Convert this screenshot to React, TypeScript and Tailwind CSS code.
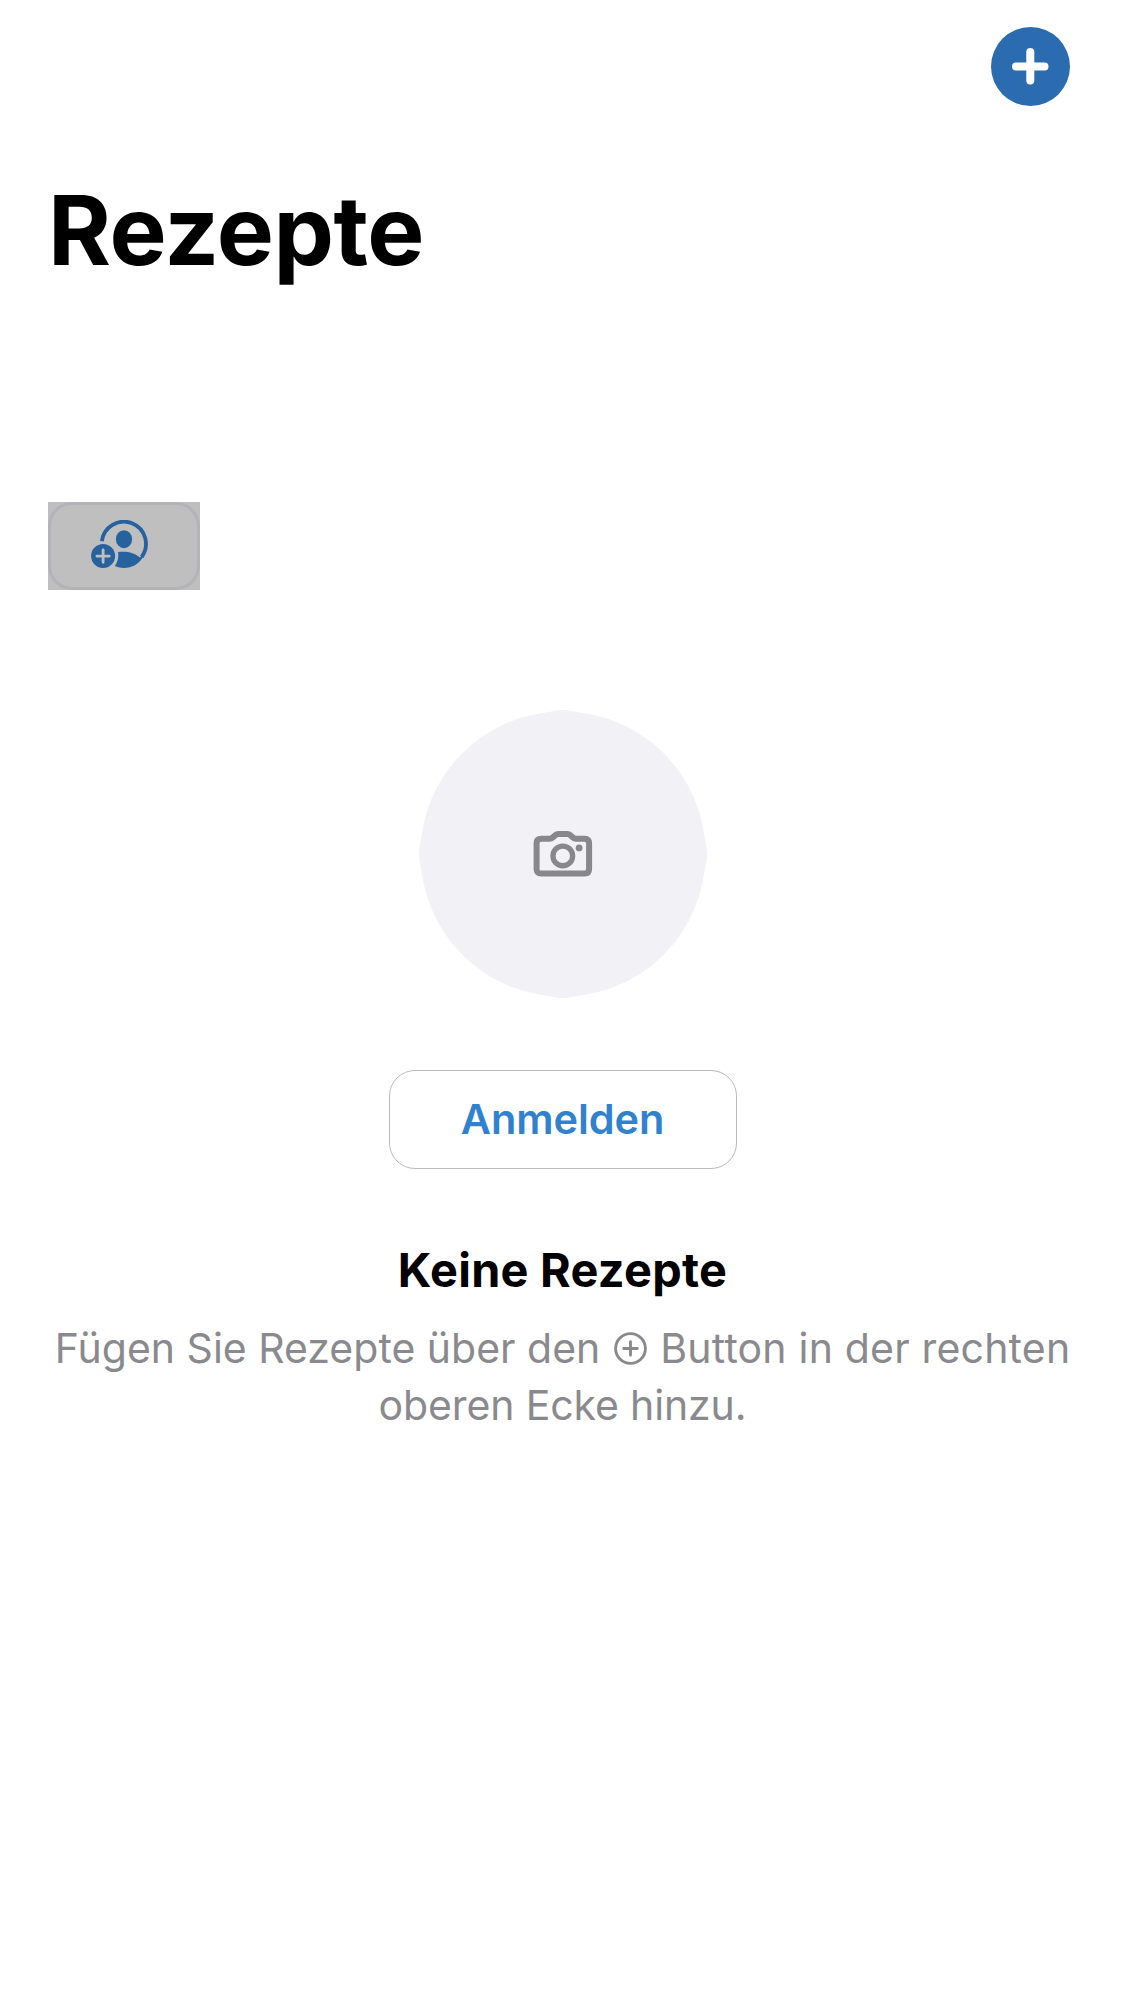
function PersonBadgePlus() {
  return (
    <svg width="58" height="49" viewBox="0 0 58 49" fill="none" className="text-[#25629e]">
      <path d="M10.9 21.2A22.1 22.1 0 1 1 50.6 37" stroke="currentColor" strokeWidth="3.8" />
      <ellipse cx="33" cy="19.2" rx="8.1" ry="9" fill="currentColor" />
      <path
        d="M27.1 32.1C35 30.9 43.5 32.5 49 37.5L51 35.5L52 37C47.9 44 41 48 33 48C30 48 26.6 47.3 23.9 46C26.7 42.1 27.9 37.3 27.1 32.1Z"
        fill="currentColor"
      />
      <circle cx="12.1" cy="36.1" r="12" fill="currentColor" />
      <path d="M5.9 36.1H18.3M12.1 29.9V42.3" stroke="#bfbfbf" strokeWidth="2.8" strokeLinecap="round" />
    </svg>
  );
}

function Camera() {
  return (
    <svg width="60" height="48" viewBox="0 0 60 48" fill="none" className="text-[#88878c]">
      <path
        d="M8 8.7H16.5C18 8.7 18.8 8.3 20 7.2L22.2 5.2C23.1 4.4 24 4 25.3 4H34.3C35.6 4 36.5 4.4 37.4 5.2L39.6 7.2C40.8 8.3 41.6 8.7 43.1 8.7H51.6C54.5 8.7 56.1 10.3 56.1 13.2V39C56.1 42 54.5 43.5 51.6 43.5H8C5.1 43.5 3.6 42 3.6 39V13.2C3.6 10.3 5.1 8.7 8 8.7Z"
        stroke="currentColor"
        strokeWidth="6"
      />
      <circle cx="29.8" cy="25.9" r="9.85" stroke="currentColor" strokeWidth="5.3" />
      <circle cx="46.1" cy="17.9" r="3.4" fill="currentColor" />
    </svg>
  );
}

function PlusCircle() {
  return (
    <svg
      width="33"
      height="33"
      viewBox="0 0 33 33"
      fill="none"
      stroke="currentColor"
      className="mx-[2px] inline-block align-[-2px]"
    >
      <circle cx="16.5" cy="16.5" r="14.9" strokeWidth="2.9" />
      <path d="M9.7 16.5H23.3M16.5 9.7V23.3" strokeWidth="2.9" strokeLinecap="round" />
    </svg>
  );
}

export default function App() {
  return (
    <main className="flex h-[2001px] w-[1125px] flex-col overflow-hidden bg-white pt-[27px] font-['Inter',sans-serif]">
      <header className="flex justify-end pr-[55px]">
        <button aria-label="Rezept hinzufügen" className="flex size-[79px] items-center justify-center rounded-full bg-[#2b6cb0]">
          <svg width="39" height="39" viewBox="0 0 39 39" stroke="white" strokeWidth="8" strokeLinecap="round">
            <path d="M5 19.5H33.5M19.3 5V33.5" />
          </svg>
        </button>
      </header>

      <h1 className="mt-[66px] ml-[48px] text-[96px] leading-[116px] font-bold tracking-[-0.5px] whitespace-nowrap text-black">
        Rezepte
      </h1>

      <button aria-label="Profil hinzufügen" className="mt-[214px] ml-[48px] flex h-[88px] w-[152px] bg-[#bfbfbf]">
        <span className="flex size-full rounded-[24px] border-[3px] border-[#b4b3b8] pt-[15px] pl-[40px]">
          <PersonBadgePlus />
        </span>
      </button>

      <section className="mt-[120px] flex flex-col items-center">
        <div className="grid size-[288px] place-items-center">
          <svg width="288" height="288" viewBox="0 0 288 288" className="col-start-1 row-start-1 text-[#f2f1f6]">
            <circle cx="144" cy="144" r="142.5" fill="currentColor" />
            <path
              d="M144 0C150 0 156 1.5 170 4.5H118C132 1.5 138 0 144 0ZM144 288C150 288 156 286.5 170 283.5H118C132 286.5 138 288 144 288ZM0 144C0 138 1.5 132 4.5 118V170C1.5 156 0 150 0 144ZM288 144C288 138 286.5 132 283.5 118V170C286.5 156 288 150 288 144Z"
              fill="currentColor"
            />
          </svg>
          <div className="col-start-1 row-start-1">
            <Camera />
          </div>
        </div>
        <button className="mt-[72px] h-[99px] w-[348px] rounded-[26px] border border-[#b9b9bb] text-[41.5px] font-semibold tracking-[-0.1px] text-[#3182ce]">
          Anmelden
        </button>
        <h2 className="mt-[73px] text-[46.8px] leading-[57px] font-bold tracking-[0.3px] whitespace-nowrap text-black">
          Keine Rezepte
        </h2>
        <p className="mt-[21px] text-center text-[41px] leading-[57px] whitespace-nowrap text-[#8a8a8e]">
          Fügen Sie Rezepte über den <PlusCircle /> <span className="tracking-[0.19px]">Button in der rechten</span>
          <br />
          <span className="tracking-[-0.13px]">oberen Ecke hinzu.</span>
        </p>
      </section>
    </main>
  );
}
